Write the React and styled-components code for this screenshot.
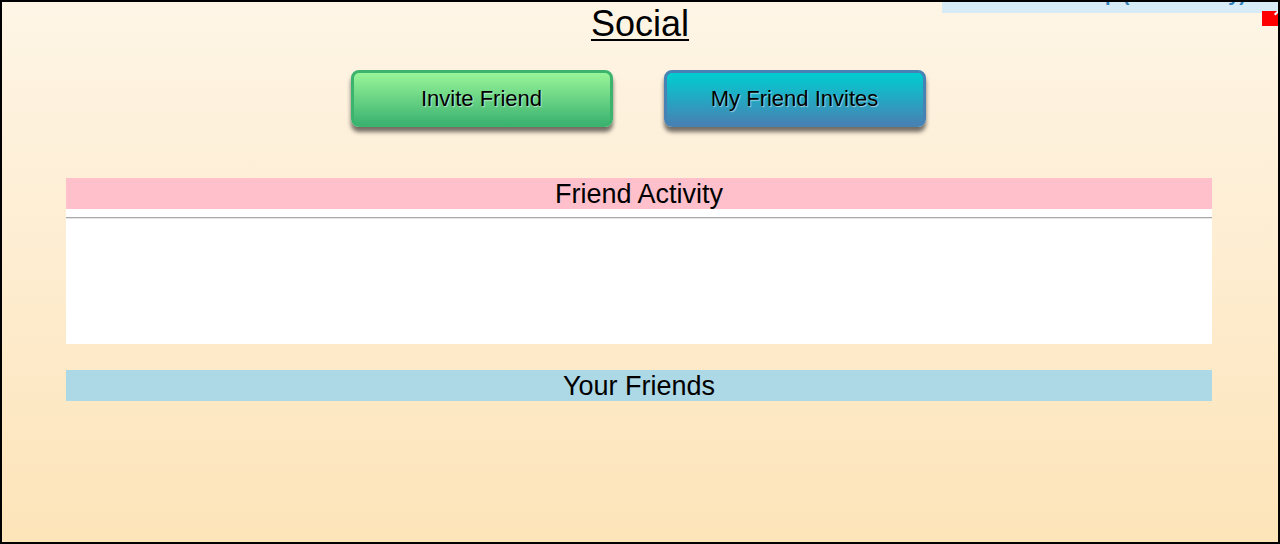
import React from "react";
import styled, { createGlobalStyle } from "styled-components";

const Global = createGlobalStyle`
  html, body {
    margin: 0;
    padding: 0;
  }
  body {
    font-family: "Liberation Sans", Arial, sans-serif;
  }
`;

const Page = styled.div`
  position: relative;
  box-sizing: border-box;
  width: 1280px;
  height: 544px;
  border: 2px solid #000;
  background: linear-gradient(to bottom, #fef5e6 0%, #fde4b9 100%);
  overflow: hidden;
`;

const Title = styled.h1`
  margin: 0;
  padding-top: 1px;
  text-align: center;
  font-size: 36px;
  font-weight: normal;
  line-height: 41px;
  text-decoration: underline;
  text-decoration-thickness: 2px;
  text-underline-offset: 3px;
  color: #000;
`;

const ButtonRow = styled.div`
  display: flex;
  justify-content: center;
  gap: 51px;
  margin-top: 26px;
  padding-right: 4px;
`;

const ActionButton = styled.button`
  box-sizing: border-box;
  width: 262px;
  height: 57px;
  padding: 0;
  border-radius: 8px;
  border: 3px solid ${({ edge }) => edge};
  background: linear-gradient(to bottom, ${({ from }) => from}, ${({ to }) => to});
  box-shadow: 0 5px 4px rgba(0, 0, 0, 0.55);
  font-family: "Liberation Sans", Arial, sans-serif;
  font-size: 22px;
  color: #000;
  text-shadow: 1px 1px 1px rgba(255, 255, 255, 0.55);
  cursor: pointer;
`;

const Section = styled.section`
  width: 1146px;
  margin: ${({ top }) => top}px 0 0 64px;
`;

const SectionHead = styled.div`
  height: 31px;
  line-height: 32px;
  text-align: center;
  font-size: 27px;
  color: #000;
  background: ${({ tone }) => tone};
`;

const Panel = styled.div`
  background: #fff;
  height: 135px;
  overflow: hidden;
`;

const Rule = styled.hr`
  margin: 8px 0 0;
  border: none;
  border-top: 1px solid #a8a8a8;
  border-bottom: 1px solid #e6e6e6;
`;

const HelpTab = styled.div`
  position: absolute;
  top: -2px;
  right: -2px;
  width: 338px;
  height: 13px;
  background: #d6ebf5;
  overflow: hidden;
`;

const HelpText = styled.span`
  position: absolute;
  right: 34px;
  bottom: 9px;
  font-size: 20px;
  line-height: 20px;
  color: #2f7fb8;
  font-weight: bold;
  white-space: nowrap;
`;

const CloseTab = styled.div`
  position: absolute;
  top: 9px;
  right: -2px;
  width: 18px;
  height: 15px;
  background: #ff0000;

  &::after {
    content: "";
    position: absolute;
    top: 1px;
    right: 1px;
    width: 5px;
    height: 2px;
    background: #fff;
    transform: rotate(-45deg);
  }
`;

export default function App() {
  return (
    <>
      <Global />
      <Page>
        <HelpTab>
          <HelpText>Get Help (Community)</HelpText>
        </HelpTab>
        <CloseTab />
        <Title>Social</Title>
        <ButtonRow>
          <ActionButton edge="#3cb46e" from="#98f598" to="#3cb371">
            Invite Friend
          </ActionButton>
          <ActionButton edge="#4682b4" from="#00ced1" to="#4682b4">
            My Friend Invites
          </ActionButton>
        </ButtonRow>
        <Section top={51}>
          <SectionHead tone="#ffc0cb">Friend Activity</SectionHead>
          <Panel>
            <Rule />
          </Panel>
        </Section>
        <Section top={26}>
          <SectionHead tone="#add8e6">Your Friends</SectionHead>
        </Section>
      </Page>
    </>
  );
}
